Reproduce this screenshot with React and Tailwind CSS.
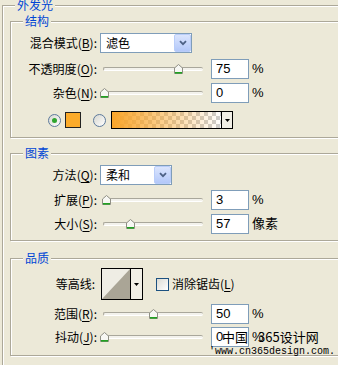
import React from 'react';

const etched = 'border border-[#aca899] shadow-[inset_1px_1px_0_#fff,1px_1px_0_#fff]';

const Group = ({ title, className = '', children }) => (
  <div className={`relative ml-[7px] w-[345px] ${etched} ${className}`}>
    <span className="absolute -top-[8px] left-[12px] px-[2px] bg-[#ece9d8] text-[#0046d5] leading-[14px]">
      {title}
    </span>
    {children}
  </div>
);

// label with the mnemonic letter underlined
const Label = ({ text, k, w = 'w-[86px]' }) => (
  <span className={`${w} shrink-0 text-right leading-[14px]`}>
    {text}
    {k && (
      <>
        (<span className="underline underline-offset-2">{k}</span>)
      </>
    )}
    :
  </span>
);

const Chevron = () => (
  <svg width="8" height="6" viewBox="0 0 8 6">
    <path d="M1 1.2 L4 4.2 L7 1.2" fill="none" stroke="#4d6185" strokeWidth="1.8" />
  </svg>
);

const Select = ({ value, w }) => (
  <div className={`ml-[3px] ${w} h-[20px] flex items-center border border-[#7f9db9] bg-white`}>
    <span className="flex-1 pl-[5px] leading-[14px]">{value}</span>
    <div className="w-[17px] h-[18px] mr-[0px] flex items-center justify-center rounded-[2px] border border-[#b9cdf9] bg-gradient-to-b from-[#dbe5fd] to-[#b3c8f9]">
      <Chevron />
    </div>
  </div>
);

const Thumb = ({ left }) => (
  <svg
    className="absolute top-[5px]"
    style={{ left }}
    width="9"
    height="10"
    viewBox="0 0 9 10"
  >
    <path d="M0.5 4 L4.5 0.5 L8.5 4 V9.5 H0.5 Z" fill="#f7f7f3" stroke="#8f8f84" strokeWidth="1" />
    <rect x="1" y="8" width="7" height="1.6" fill="#21a121" />
  </svg>
);

const Slider = ({ f }) => (
  <div className="relative ml-[3px] w-[106px] h-[20px] flex items-center">
    <div className="mx-[3px] flex-1 h-[4px] rounded-[2px] border-t border-l border-[#a9a79b] border-b border-b-white bg-[#f3f2ec]" />
    <Thumb left={f * 99 - 0.5} />
  </div>
);

const NumInput = ({ value }) => (
  <div className="ml-[5px] w-[38px] h-[20px] flex items-center border border-[#7f9db9] bg-white pl-[4px] font-['Liberation_Sans',sans-serif] text-[13px] leading-[14px]">
    {value}
  </div>
);

const Unit = ({ children }) => (
  <span className="ml-[3px] leading-[14px] font-['Liberation_Sans','Noto_Sans_CJK_SC',sans-serif] text-[13px]">
    {children}
  </span>
);

const SliderRow = ({ label, k, f, value, unit = '%', className }) => (
  <div className={`flex items-center h-[20px] ${className}`}>
    <Label text={label} k={k} />
    <Slider f={f} />
    <NumInput value={value} />
    <Unit>{unit}</Unit>
  </div>
);

const Radio = ({ checked }) => (
  <div className="w-[13px] h-[13px] rounded-full border border-[#5d7a9c] bg-gradient-to-br from-[#d7d7d0] to-white flex items-center justify-center">
    {checked && <div className="w-[5px] h-[5px] rounded-full bg-[#2fa52f]" />}
  </div>
);

const DropArrow = () => (
  <svg width="5" height="3" viewBox="0 0 5 3">
    <path d="M0 0 H5 L2.5 3 Z" fill="#000" />
  </svg>
);

export default function App() {
  return (
    <div className="relative w-[338px] h-[365px] overflow-hidden bg-[#ece9d8] text-[12px] text-black font-['Noto_Sans_CJK_SC',sans-serif]">
      <div className={`relative ml-[2px] mt-[5px] w-[360px] h-[380px] ${etched}`}>
        <span className="absolute -top-[8px] left-[12px] px-[2px] bg-[#ece9d8] text-[#0046d5] leading-[14px]">
          外发光
        </span>

        {/* 结构 */}
        <Group title="结构" className="mt-[15px] pb-[8px]">
          <div className="mt-[11px] flex items-center h-[20px]">
            <Label text="混合模式" k="B" />
            <Select value="滤色" w="w-[92px]" />
          </div>
          <SliderRow label="不透明度" k="O" f={0.75} value="75" className="mt-[6px]" />
          <SliderRow label="杂色" k="N" f={0} value="0" className="mt-[4px]" />
          <div className="mt-[8px] h-[18px] flex items-center pl-[37px]">
            <Radio checked />
            <div className="ml-[4px] w-[16px] h-[16px] border border-[#222] bg-[#fbab2b]" />
            <div className="ml-[12px]">
              <Radio />
            </div>
            <div className="ml-[5px] w-[122px] h-[18px] flex border border-black">
              <div className="relative flex-1 bg-[repeating-conic-gradient(#cdcdcd_0_25%,#ffffff_0_50%)] bg-[length:8px_8px]">
                <div className="h-full bg-gradient-to-r from-[#f9a52a] to-transparent" />
              </div>
              <div className="w-[11px] border-l border-black bg-[#f1efe6] flex items-center justify-center">
                <DropArrow />
              </div>
            </div>
          </div>
        </Group>

        {/* 图素 */}
        <Group title="图素" className="mt-[15px] pb-[6px]">
          <div className="mt-[11px] flex items-center h-[20px]">
            <Label text="方法" k="Q" />
            <Select value="柔和" w="w-[72px]" />
          </div>
          <SliderRow label="扩展" k="P" f={0.03} value="3" className="mt-[5px]" />
          <SliderRow label="大小" k="S" f={0.27} value="57" unit="像素" className="mt-[4px]" />
        </Group>

        {/* 品质 */}
        <Group title="品质" className="mt-[17px] pb-[8px]">
          <div className="mt-[9px] h-[32px] flex items-center">
            <Label text="等高线" w="w-[84px]" />
            <div className="ml-[6px] w-[42px] h-[32px] flex border border-black bg-[#f1efe6]">
              <svg width="28" height="30" viewBox="0 0 28 30" className="shrink-0">
                <rect width="28" height="30" fill="#efede4" />
                <polygon points="0,30 28,0 28,30" fill="#aaa596" />
              </svg>
              <div className="flex-1 border-l border-black flex items-center justify-center">
                <DropArrow />
              </div>
            </div>
            <div className="ml-[13px] w-[13px] h-[13px] border border-[#1c5180] bg-gradient-to-br from-[#dcdcd5] to-white" />
            <span className="ml-[3px] leading-[14px]">
              消除锯齿(<span className="underline underline-offset-2">L</span>)
            </span>
          </div>
          <SliderRow label="范围" k="R" f={0.495} value="50" className="mt-[4px]" />
          <SliderRow label="抖动" k="J" f={0} value="0" className="mt-[3px]" />
        </Group>
      </div>

      {/* watermark laid over the dialog */}
      <div className="absolute left-[222px] top-[330px] flex text-[13px] leading-[14px]">
        <span>中国</span>
        <span className="ml-[10px]">365设计网</span>
      </div>
      <div className="absolute left-[209px] top-[346px] font-['Liberation_Mono',monospace] text-[10px] leading-[11px]">
        'www.cn365design.com.
      </div>
    </div>
  );
}
